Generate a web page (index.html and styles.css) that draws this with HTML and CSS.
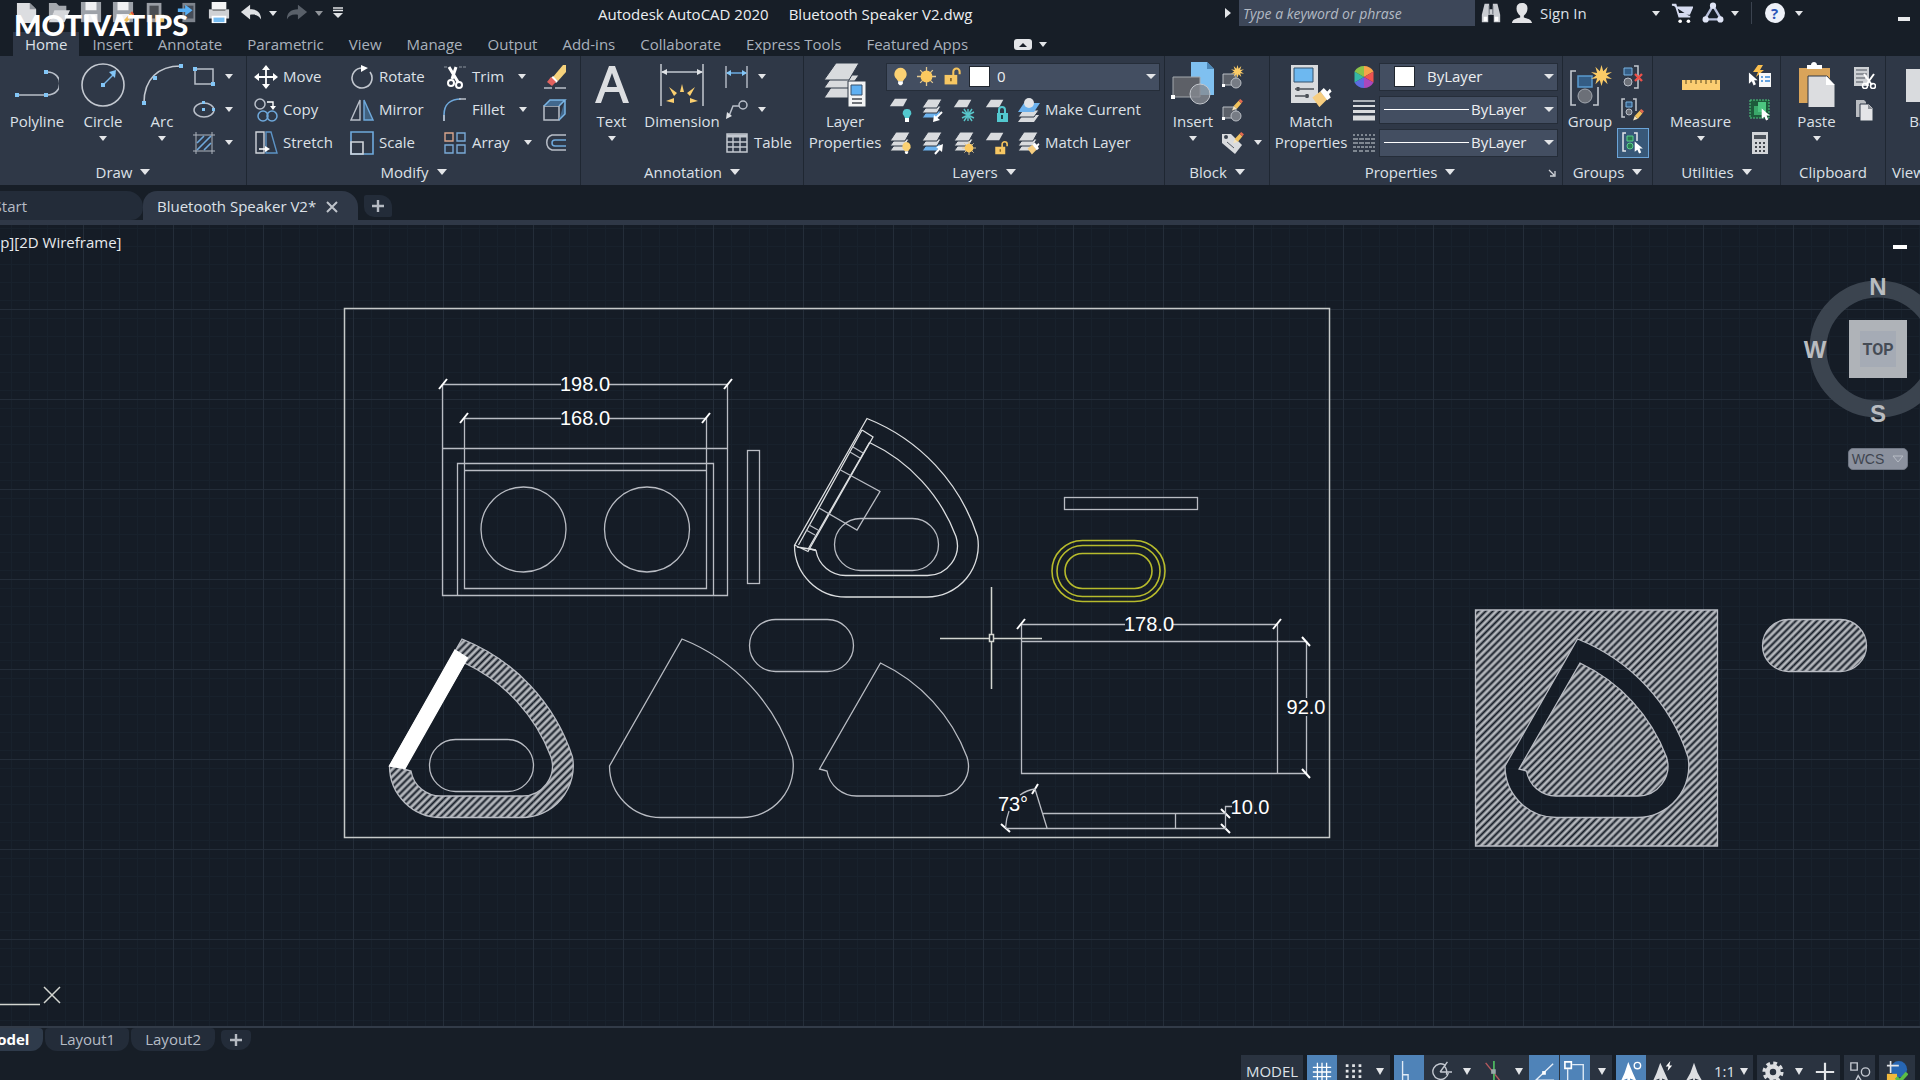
FILE: index.html
```html
<!DOCTYPE html>
<html lang="en">
<head>
    <meta charset="UTF-8">
    <meta name="viewport" content="width=device-width, initial-scale=1.0">
    <title>Autodesk AutoCAD 2020 - Bluetooth Speaker V2.dwg</title>
    <link rel="stylesheet" href="styles.css">
</head>
<body>
    <!-- shared icon parts -->
    <svg class="sprite" aria-hidden="true">
        <symbol id="sheet" viewBox="0 0 24 24"><path d="M7 2h15l-5 9H1z" fill="#d9dbde"/></symbol>
        <symbol id="stack" viewBox="0 0 24 24">
            <path d="M6 13h14l-4 7H1z" fill="#d9dbde" stroke="#2f3847"/>
            <path d="M6 8h14l-4 7H1z" fill="#d9dbde" stroke="#2f3847"/>
            <path d="M7 1h14l-5 9H1z" fill="#d9dbde" stroke="#2f3847"/>
        </symbol>
        <symbol id="bstack" viewBox="0 0 24 24">
            <path d="M6 13h14l-4 7H1z" fill="#6cb2ee" stroke="#2f3847"/>
            <path d="M6 8h14l-4 7H1z" fill="#d9dbde" stroke="#2f3847"/>
            <path d="M7 1h14l-5 9H1z" fill="#d9dbde" stroke="#2f3847"/>
        </symbol>
        <symbol id="pencil" viewBox="0 0 24 24">
            <path d="M2 22l3-8 6 5z" fill="#f3e3c0"/><path d="M5 14l9-10 5 5-8 10z" fill="#f2c25c"/><path d="M14 4l3-3 5 4-3 4z" fill="#e36a4f"/>
        </symbol>
        <symbol id="bulb" viewBox="0 0 24 24">
            <path d="M12 1a8 8 0 0 0-5 14l2 3h6l2-3a8 8 0 0 0-5-14z" fill="#fbd173"/><path d="M9 18h6v3l-2 2h-2l-2-2z" fill="#fff"/>
        </symbol>
        <symbol id="sun" viewBox="0 0 24 24">
            <path d="M12 0v24M0 12h24M4 4l16 16M20 4L4 20" stroke="#e2c892" stroke-width="1.6"/><circle cx="12" cy="12" r="7.5" fill="#fbc95f"/>
        </symbol>
        <symbol id="lock" viewBox="0 0 24 24">
            <path d="M13 11V6a4 4 0 0 1 8 0v3" fill="none" stroke="#f5c35c" stroke-width="2.6"/><path d="M2 10h16v12H2z" fill="#f7c763"/><path d="M10 14v4" stroke="#7a5a20" stroke-width="2"/>
        </symbol>
        <symbol id="star" viewBox="0 0 24 24">
            <path d="M12 0l2 7 5-5-2 7 7-1-6 4 6 4-7-1 2 7-5-5-2 7-2-7-5 5 2-7-7 1 6-4-6-4 7 1-2-7 5 5z" fill="#fbcb66"/>
        </symbol>
        <symbol id="cursor" viewBox="0 0 24 24"><path d="M5 1v19l5-4 3 7 4-2-3-7h6z" fill="#fff"/></symbol>
        <symbol id="brush" viewBox="0 0 24 24">
            <path d="M1 12l9-7 8 9-9 9z" fill="#f6cd80"/><path d="M10 5l4-4 4 4 3-3 2 3-3 3 2 4-4 3z" fill="#fff"/>
        </symbol>
        <symbol id="blockpart" viewBox="0 0 24 24">
            <path d="M2 9h13v11H2z" fill="#5b6069" stroke="#b9bdc4"/><circle cx="15" cy="18" r="5" fill="#777c85" stroke="#b9bdc4"/><path d="M1 19h3v3H1z" fill="#fff"/>
        </symbol>
    </svg>

    <div class="watermark">MOTIVATIPS</div>

    <header class="title-bar">
        <div class="quick">
            <button aria-label="New"><svg viewBox="0 0 24 24"><path d="M1 1h14l7 7v15H1z" fill="#dcdde0"/><path d="M15 1v7h7" fill="#8f949c"/></svg></button>
            <button aria-label="Open"><svg viewBox="0 0 24 24"><path d="M1 1h8l3 3h8v6H7L1 22z" fill="#a4a8ae"/><path d="M7 9h17l-6 13H1z" fill="#d6d8dc"/></svg></button>
            <button aria-label="Save"><svg viewBox="0 0 24 24"><path d="M1 0h22v22H1z" fill="#9da2a9"/><path d="M6 0h12v9H6zM5 13h14v9H5z" fill="#f1f2f4"/></svg></button>
            <button aria-label="Save as"><svg viewBox="0 0 24 24"><path d="M1 0h22v22H1z" fill="#9da2a9"/><path d="M6 0h12v9H6zM5 13h14v9H5z" fill="#f1f2f4"/><path d="M13 20l8-9 3 3-8 8z" fill="#f0bd56"/><path d="M20 12l2-2 2 3v2z" fill="#e2573e"/></svg></button>
            <button aria-label="Open from mobile"><svg viewBox="0 0 24 24"><path d="M3 1h16v21H3z" fill="#9a9ea5"/><path d="M6 4h10v14H6z" fill="#4a4d52"/><path d="M12 14h10v8H12z" fill="#edc06a"/></svg></button>
            <button aria-label="Save to mobile"><svg viewBox="0 0 24 24"><path d="M7 1h14v21H7z" fill="#7e848d"/><path d="M9 4h10v14H9z" fill="#454c57"/><path d="M2 7h8V3l8 6-8 6v-4H2z" fill="#59b0f5"/></svg></button>
            <button aria-label="Plot"><svg viewBox="0 0 24 24"><path d="M4 0h16v8H4z" fill="#f4f4f5"/><path d="M1 8h22v10H1z" fill="#cfd1d4"/><path d="M5 9h14" stroke="#666"/><path d="M4 15h16v8H4z" fill="#fff"/><path d="M6 17h12v5H6z" fill="#76bdf2"/></svg></button>
            <button class="history" aria-label="Undo"><svg viewBox="0 0 24 24"><path d="M1 11l10-8v5c8 0 12 4 12 11-2-4-6-6-12-5v5z" fill="#dfe1e4"/></svg><i class="caret"></i></button>
            <button class="history dim" aria-label="Redo"><svg viewBox="0 0 24 24"><path d="M23 11L13 3v5C5 8 1 12 1 19c2-4 6-6 12-5v5z" fill="#596069"/></svg><i class="caret"></i></button>
            <button class="custom" aria-label="Customize"><svg viewBox="0 0 12 12"><path d="M1 1h10M1 3.5h10" stroke="#dfe1e4" stroke-width="1.4"/><path d="M1 6h10l-5 5z" fill="#dfe1e4"/></svg></button>
        </div>
        <div class="window-title"><span>Autodesk AutoCAD 2020</span><span>Bluetooth Speaker V2.dwg</span></div>
        <div class="infocenter">
            <i class="caret side"></i>
            <input class="search" type="text" placeholder="Type a keyword or phrase" aria-label="Search">
            <button aria-label="Find"><svg viewBox="0 0 24 24"><path d="M5 2h5v6h4V2h5l3 12v8h-7v-8h-6v8H2v-8z" fill="#c9ccd1"/><path d="M4 16h4v5H4zM16 16h4v5h-4z" fill="#fff"/><path d="M10 4v9M14 4v9" stroke="#565d67"/></svg></button>
            <button class="sign-in"><svg viewBox="0 0 24 24"><path d="M12 1c-4 0-6 2-6 6s2 6 4 8v2c-3 1-8 1-9 6h22c-1-5-6-5-9-6v-2c2-2 4-4 4-8s-2-6-6-6z" fill="#e2e3e6"/></svg><span>Sign In</span><i class="caret"></i></button>
            <button aria-label="App Store"><svg viewBox="0 0 24 24"><path d="M1 3h4l4 13h12M6 6h17l-3 7H8" fill="#d5dbf0" stroke="#d5dbf0" stroke-width="2"/><circle cx="10" cy="21" r="2" fill="#fff"/><circle cx="19" cy="21" r="2" fill="#fff"/></svg></button>
            <button class="network" aria-label="Autodesk App"><svg viewBox="0 0 24 24"><path d="M12 4l9 15H3z" fill="none" stroke="#b8c0dc" stroke-width="2.6"/><circle cx="12" cy="4" r="3.4" fill="#dfe4f5"/><circle cx="4" cy="19" r="3.4" fill="#dfe4f5"/><circle cx="20" cy="19" r="3.4" fill="#dfe4f5"/></svg><i class="caret"></i></button>
            <button class="help" aria-label="Help"><b>?</b><i class="caret"></i></button>
            <button class="minimize" aria-label="Minimize"></button>
        </div>
    </header>

    <nav class="ribbon-tabs">
        <button class="active">Home</button>
        <button>Insert</button>
        <button>Annotate</button>
        <button>Parametric</button>
        <button>View</button>
        <button>Manage</button>
        <button>Output</button>
        <button>Add-ins</button>
        <button>Collaborate</button>
        <button>Express Tools</button>
        <button>Featured Apps</button>
        <button class="collapse" aria-label="Minimize ribbon"><svg viewBox="0 0 18 11"><rect width="18" height="11" rx="3" fill="#e3e5e8"/><path d="M5 8l4-4 4 4z" fill="#1a212b"/></svg><i class="caret"></i></button>
    </nav>

    <section class="ribbon">
        <div class="panel">
            <div class="tools draw">
                <button class="big"><svg viewBox="0 0 44 46"><path d="M2 34h30c17 0 17-23 0-23" fill="none" stroke="#b9bfc9" stroke-width="1.6"/><path d="M0 32h4v4H0zM29 32h4v4h-4zM29 9h4v4h-4z" fill="#83c6f7"/></svg>Polyline</button>
                <button class="big"><svg viewBox="0 0 44 46"><circle cx="22" cy="24" r="21" fill="none" stroke="#c3c8d0" stroke-width="1.6"/><path d="M22 24L34 12" stroke="#79b4e4" stroke-width="1.4"/><path d="M20 22h4v4h-4z" fill="#83c6f7"/><path d="M35 9l-1 8-6-6z" fill="#83c6f7"/></svg>Circle<i class="caret"></i></button>
                <button class="big"><svg viewBox="0 0 44 46"><path d="M4 42C4 18 18 5 41 5" fill="none" stroke="#c3c8d0" stroke-width="1.6"/><path d="M2 40h4v4H2zM13 15h4v4h-4zM39 3h4v4h-4z" fill="#83c6f7"/></svg>Arc<i class="caret"></i></button>
                <button class="small" aria-label="Rectangle"><svg viewBox="0 0 24 24"><path d="M3 4h18v15H3z" fill="none" stroke="#b9bfc9" stroke-width="1.5"/><path d="M1 2h4v4H1zM19 17h4v4h-4z" fill="#83c6f7"/></svg><i class="caret"></i></button>
                <button class="small" aria-label="Ellipse"><svg viewBox="0 0 24 24"><ellipse cx="12" cy="12" rx="10" ry="7" fill="none" stroke="#b9bfc9" stroke-width="1.5"/><path d="M10 10h3v3h-3zM10 3h3v3h-3zM20 10h3v3h-3z" fill="#83c6f7"/></svg><i class="caret"></i></button>
                <button class="small" aria-label="Hatch"><svg viewBox="0 0 24 24"><path d="M4 1v22M20 1v22M1 4h22M1 20h22" stroke="#aeb4be"/><path d="M5 12l7-7M5 19L19 5M12 19l7-7" stroke="#6fa9dc" stroke-width="1.6"/></svg><i class="caret"></i></button>
            </div>
            <button class="panel-title">Draw<i class="caret"></i></button>
        </div>

        <div class="panel">
            <div class="tools modify">
                <button class="small"><svg viewBox="0 0 24 24"><path d="M12 3v18M3 12h18" stroke="#fff" stroke-width="1.8"/><path d="M12 0l4 5H8zM12 24l4-5H8zM0 12l5-4v8zM24 12l-5-4v8z" fill="#fff"/></svg>Move</button>
                <button class="small"><svg viewBox="0 0 24 24"><circle cx="6" cy="6" r="5" fill="none" stroke="#b9bfc9" stroke-width="1.5"/><path d="M13 4h6v5" fill="none" stroke="#fff" stroke-width="1.4"/><path d="M16 8h6l-3 4z" fill="#fff"/><circle cx="9" cy="18" r="5" fill="none" stroke="#6fa9dc" stroke-width="1.5"/><circle cx="18" cy="18" r="5" fill="none" stroke="#6fa9dc" stroke-width="1.5"/></svg>Copy</button>
                <button class="small"><svg viewBox="0 0 24 24"><path d="M2 1h8v21H2z" fill="none" stroke="#d0d4da" stroke-width="1.4"/><path d="M12 1h5l6 21H12z" fill="none" stroke="#5d94c6" stroke-width="1.4"/><path d="M5 18h7" stroke="#fff" stroke-width="1.5"/><path d="M11 15l5 3-5 3z" fill="#fff"/></svg>Stretch</button>
                <button class="small"><svg viewBox="0 0 24 24"><path d="M20 7a10 10 0 1 1-8-4" fill="none" stroke="#c3c8d0" stroke-width="1.6"/><path d="M11 0l7 3-7 4z" fill="#fff"/></svg>Rotate</button>
                <button class="small"><svg viewBox="0 0 24 24"><path d="M10 2v20H1z" fill="none" stroke="#b9bfc9" stroke-width="1.4"/><path d="M14 2v20h9z" fill="#41617f" stroke="#6fa9dc" stroke-width="1.4"/></svg>Mirror</button>
                <button class="small"><svg viewBox="0 0 24 24"><path d="M1 1h22v22H1z" fill="none" stroke="#6fa9dc" stroke-width="1.6"/><path d="M1 11h12v12H1z" fill="none" stroke="#d0d4da" stroke-width="1.6"/></svg>Scale</button>
                <button class="small"><svg viewBox="0 0 24 24"><path d="M1 2h4M16 2h7" stroke="#8d949f" stroke-dasharray="3 1"/><path d="M6 2l9 15M13 2L9 14" stroke="#fff" stroke-width="3"/><circle cx="8" cy="18" r="3" fill="none" stroke="#fff" stroke-width="2"/><circle cx="16" cy="20" r="3" fill="none" stroke="#fff" stroke-width="2"/></svg>Trim<i class="caret"></i></button>
                <button class="small"><svg viewBox="0 0 24 24"><path d="M1 23v-6C1 6 8 1 18 1" fill="none" stroke="#6fa9dc" stroke-width="1.6"/><path d="M1 23v-6M16 1h7" stroke="#b9bfc9" stroke-width="1.6"/></svg>Fillet<i class="caret"></i></button>
                <button class="small"><svg viewBox="0 0 24 24"><path d="M2 2h8v8H2z" fill="none" stroke="#d9a58c" stroke-width="1.4"/><path d="M14 2h8v8h-8zM2 14h8v8H2zM14 14h8v8h-8z" fill="none" stroke="#79a9d6" stroke-width="1.4"/></svg>Array<i class="caret"></i></button>
                <button class="small" aria-label="Erase"><svg viewBox="0 0 24 24"><path d="M10 12L20 0h3v7l-8 9z" fill="#f6d27c"/><path d="M8 13l2-2 5 5-2 2z" fill="#fff"/><path d="M4 17l4-5 5 5-4 4z" fill="#e2625f"/><path d="M1 23h8M12 23h11" stroke="#b9bfc9" stroke-width="1.5"/></svg></button>
                <button class="small" aria-label="Explode"><svg viewBox="0 0 24 24"><path d="M1 8h15v14H1z" fill="none" stroke="#b9bfc9" stroke-width="1.5"/><path d="M1 8l6-6h15l-6 6M16 22l6-6V2" fill="#42688d" stroke="#79b4e4" stroke-width="1.5"/></svg></button>
                <button class="small" aria-label="Offset"><svg viewBox="0 0 24 24"><path d="M23 4H9a8 8 0 0 0 0 15h14" fill="none" stroke="#b9bfc9" stroke-width="1.5"/><path d="M23 9H12a3 3 0 0 0 0 6h11" fill="none" stroke="#6fa9dc" stroke-width="1.5"/></svg></button>
            </div>
            <button class="panel-title">Modify<i class="caret"></i></button>
        </div>

        <div class="panel">
            <div class="tools annotation">
                <button class="big"><svg viewBox="0 0 44 46"><path d="M5 42L19 5h6l14 37h-6l-4-11H15l-4 11zM17 26h10l-5-14z" fill="#dcdee1"/></svg>Text<i class="caret"></i></button>
                <button class="big"><svg viewBox="0 0 44 46"><path d="M1 3v42M43 3v42" stroke="#c3c8d0" stroke-width="1.5"/><path d="M2 11h40" stroke="#c3c8d0" stroke-width="1.5"/><path d="M1 11l6-3v6zM43 11l-6-3v6z" fill="#dfe2e6"/><path d="M22 23l2 8h-4zM9 26l8 6-3 3zM35 26l-8 6 3 3zM6 40l8-3v5zM38 40l-8-3v5z" fill="#fbcf6f"/></svg>Dimension</button>
                <button class="small" aria-label="Linear"><svg viewBox="0 0 24 24"><path d="M1 1v22M22 1v22" stroke="#b9bfc9" stroke-width="1.4"/><path d="M2 8h19" stroke="#6fb4ee" stroke-width="1.4"/><path d="M1 8l5-3v6zM22 8l-5-3v6z" fill="#83c6f7"/></svg><i class="caret"></i></button>
                <button class="small" aria-label="Leader"><svg viewBox="0 0 24 24"><circle cx="18" cy="7" r="4" fill="none" stroke="#b9bfc9" stroke-width="1.5"/><path d="M14 8H8L4 18" fill="none" stroke="#b9bfc9" stroke-width="1.5"/><path d="M1 21l1-7 5 4z" fill="#dfe2e6"/></svg><i class="caret"></i></button>
                <button class="small"><svg viewBox="0 0 24 24"><path d="M2 3h20v18H2z" fill="none" stroke="#c3c8d0" stroke-width="1.5"/><path d="M2 5h20" stroke="#c3c8d0" stroke-width="3"/><path d="M2 11h20M2 16h20M8 5v16M15 5v16" stroke="#c3c8d0" stroke-width="1.4"/></svg>Table</button>
            </div>
            <button class="panel-title">Annotation<i class="caret"></i></button>
        </div>

        <div class="panel">
            <div class="tools layers">
                <button class="big"><svg viewBox="0 0 44 46"><path d="M9 25h26l-9 12H1z" fill="#d9dbde" stroke="#2f3847"/><path d="M10 14h26l-9 13H1z" fill="#d9dbde" stroke="#2f3847"/><path d="M13 2h23L26 19H1z" fill="#d9dbde" stroke="#2f3847"/><path d="M25 20h18v26H25z" fill="#f2f3f4" stroke="#2f3847"/><path d="M28 24h11v10H28z" fill="#5fb0f2" stroke="#38516b"/><path d="M29 38h10M29 42h10" stroke="#43484f" stroke-width="1.4"/></svg>Layer<br>Properties</button>
                <div class="layer-grid">
                    <div class="combo">
                        <svg viewBox="0 0 24 24"><use href="#bulb"/></svg>
                        <svg viewBox="0 0 24 24"><use href="#sun"/></svg>
                        <svg viewBox="0 0 24 24"><use href="#lock"/></svg>
                        <i class="swatch"></i>
                        <select aria-label="Layer"><option>0</option></select>
                        <i class="caret"></i>
                    </div>
                    <div class="layer-row">
                        <button aria-label="Off"><svg viewBox="0 0 24 24"><use href="#sheet" width="20" height="20" y="-1"/><path d="M18 11a4 4 0 0 0-3 7l1 2h4l1-2a4 4 0 0 0-3-7z" fill="#53c8cf"/><path d="M16 20h4v4h-4z" fill="#fff"/></svg></button>
                        <button aria-label="Isolate"><svg viewBox="0 0 24 24"><use href="#bstack"/><path d="M21 14l-6 6" stroke="#fff" stroke-width="2"/><path d="M12 24l1-7 6 5z" fill="#fff"/></svg></button>
                        <button aria-label="Freeze"><svg viewBox="0 0 24 24"><use href="#sheet" width="20" height="20"/><path d="M15 11v12M9 14l12 6M9 20l12-6M11 11l8 12M19 11l-8 12" stroke="#58c5c9" stroke-width="1.4"/></svg></button>
                        <button aria-label="Lock"><svg viewBox="0 0 24 24"><use href="#sheet" width="20" height="20"/><path d="M14 15v-3a3 3 0 0 1 6 0v3" fill="none" stroke="#53c8cf" stroke-width="2"/><path d="M12 15h11v9H12z" fill="#53c8cf"/><path d="M17 17v4" stroke="#1c4448" stroke-width="2"/></svg></button>
                        <button class="labelled"><svg viewBox="0 0 24 24"><path d="M6 17h16l-5 7H1z" fill="#d9dbde"/><path d="M6 12h16l-5 7H1z" fill="#d9dbde" stroke="#2f3847"/><path d="M7 5h16l-6 9H1z" fill="#6cb2ee"/><circle cx="12" cy="5" r="5" fill="#e2e3e6"/></svg>Make Current</button>
                    </div>
                    <div class="layer-row">
                        <button aria-label="Turn all on"><svg viewBox="0 0 24 24"><use href="#stack"/><use href="#bulb" x="11" y="10" width="13" height="14"/></svg></button>
                        <button aria-label="Unisolate"><svg viewBox="0 0 24 24"><use href="#bstack"/><path d="M14 23l6-7" stroke="#fff" stroke-width="2"/><path d="M22 13l-1 8-6-5z" fill="#fff"/></svg></button>
                        <button aria-label="Thaw all"><svg viewBox="0 0 24 24"><use href="#stack"/><use href="#sun" x="9" y="10" width="14" height="14"/></svg></button>
                        <button aria-label="Unlock"><svg viewBox="0 0 24 24"><use href="#sheet" width="20" height="20"/><use href="#lock" x="9" y="9" width="15" height="16"/></svg></button>
                        <button class="labelled"><svg viewBox="0 0 24 24"><use href="#stack"/><use href="#brush" x="10" y="11" width="13" height="13"/></svg>Match Layer</button>
                    </div>
                </div>
            </div>
            <button class="panel-title">Layers<i class="caret"></i></button>
        </div>

        <div class="panel">
            <div class="tools block">
                <button class="big"><svg viewBox="0 0 44 46"><path d="M20 1h16l7 7v26H20z" fill="#7fc0f0"/><path d="M36 1v7h7" fill="#4d88b8"/><path d="M2 16h27v20H2z" fill="#5d6067" stroke="#a4a8ae"/><circle cx="29" cy="33" r="10" fill="#868a91" fill-opacity=".8" stroke="#c3c7cd"/><path d="M0 34h4v4H0z" fill="#fff"/></svg>Insert<i class="caret"></i></button>
                <button class="small" aria-label="Create"><svg viewBox="0 0 24 24"><use href="#blockpart"/><use href="#star" x="10" y="0" width="13" height="13"/></svg></button>
                <button class="small" aria-label="Edit"><svg viewBox="0 0 24 24"><use href="#blockpart"/><use href="#pencil" x="10" y="0" width="13" height="14"/></svg></button>
                <button class="small" aria-label="Edit attributes"><svg viewBox="0 0 24 24"><path d="M1 3h9l11 11-7 9L1 12z" fill="#d9dbde"/><circle cx="5" cy="6" r="2" fill="#3a424e"/><path d="M6 11l7 6" stroke="#555b64"/><use href="#pencil" x="11" y="0" width="13" height="14"/></svg><i class="caret"></i></button>
            </div>
            <button class="panel-title">Block<i class="caret"></i></button>
        </div>

        <div class="panel">
            <div class="tools properties">
                <button class="big"><svg viewBox="0 0 44 46"><path d="M2 4h27v38H2z" fill="#d9dbde"/><path d="M5 7h19v14H5z" fill="#6db8f0" stroke="#36526d"/><path d="M6 28h19M6 35h14" stroke="#4b5057" stroke-width="1.5"/><path d="M9 26v4M18 33v4" stroke="#4b5057" stroke-width="3"/><use href="#brush" x="22" y="26" width="22" height="21"/></svg>Match<br>Properties</button>
                <button class="small" aria-label="Object color"><svg viewBox="0 0 24 24"><path d="M12 12V1a11 11 0 0 1 9.500 5.500z" fill="#f7a34a"/><path d="M12 12l9.500-5.500v11z" fill="#ef5350"/><path d="M12 12l9.500 5.500A11 11 0 0 1 12 23z" fill="#ab47bc"/><path d="M12 12v11a11 11 0 0 1-9.500-5.500z" fill="#5c6be0"/><path d="M12 12l-9.500 5.500v-11z" fill="#35b8a6"/><path d="M12 12L2.500 6.500A11 11 0 0 1 12 1z" fill="#8bc34a"/></svg></button>
                <button class="small" aria-label="Lineweight"><svg viewBox="0 0 24 24"><path d="M1 3h22" stroke="#d9dbde" stroke-width="1.5"/><path d="M1 8h22" stroke="#d9dbde" stroke-width="2"/><path d="M1 13.500h22" stroke="#d9dbde" stroke-width="3"/><path d="M1 20h22" stroke="#d9dbde" stroke-width="5"/></svg></button>
                <button class="small" aria-label="Linetype"><svg viewBox="0 0 24 24"><path d="M1 4h22" stroke="#9ba1aa" stroke-width="1.5" stroke-dasharray="2 2"/><path d="M1 8h22M1 12h22" stroke="#9ba1aa" stroke-width="1.500" stroke-dasharray="5 1"/><path d="M1 16h22" stroke="#9ba1aa" stroke-width="1.500" stroke-dasharray="3 1"/><path d="M1 20h22" stroke="#9ba1aa" stroke-width="1.500" stroke-dasharray="4 2"/></svg></button>
                <div class="combo color"><i class="swatch"></i><select aria-label="Color"><option>ByLayer</option></select><i class="caret"></i></div>
                <div class="combo line"><hr><select aria-label="Lineweight"><option>ByLayer</option></select><i class="caret"></i></div>
                <div class="combo line"><hr><select aria-label="Linetype"><option>ByLayer</option></select><i class="caret"></i></div>
            </div>
            <div class="title-row">
                <button class="panel-title">Properties<i class="caret"></i></button>
                <button class="launcher" aria-label="Properties palette"><svg viewBox="0 0 8 8"><path d="M1 1l5 5M7 2v5H2" fill="none" stroke="#cfd3d9" stroke-width="1.3"/></svg></button>
            </div>
        </div>

        <div class="panel">
            <div class="tools groups">
                <button class="big"><svg viewBox="0 0 44 46"><path d="M8 10H3v34h5M25 44h5V26" fill="none" stroke="#c3c8d0" stroke-width="1.6"/><path d="M10 15h14v11H10z" fill="#345d85" stroke="#5a9ad0" stroke-width="1.500"/><circle cx="17" cy="35" r="7" fill="#6c7078" stroke="#a3a8b0"/><use href="#star" x="23" y="3" width="21" height="23"/></svg>Group</button>
                <button class="small" aria-label="Ungroup"><svg viewBox="0 0 24 24"><path d="M3 3h8v7H3z" fill="#345d85" stroke="#79b4e4"/><circle cx="7" cy="17" r="4" fill="#6c7078" stroke="#b9bfc9"/><path d="M13 1h4v22h-4" fill="none" stroke="#c3c8d0" stroke-width="1.500"/><path d="M14 9l7 7M21 9l-7 7" stroke="#ec5049" stroke-width="2.400"/></svg></button>
                <button class="small" aria-label="Group edit"><svg viewBox="0 0 24 24"><path d="M4 1H1v18h3M12 1h3v12" fill="none" stroke="#c3c8d0" stroke-width="1.500"/><path d="M5 4h6v5H5z" fill="#345d85" stroke="#79b4e4"/><circle cx="8" cy="14" r="3" fill="#6c7078" stroke="#b9bfc9"/><use href="#pencil" x="11" y="10" width="13" height="14"/></svg></button>
                <button class="small on" aria-label="Group selection"><svg viewBox="0 0 24 24"><path d="M5 2H2v18h3M13 2h3v8" fill="none" stroke="#e3e6ea" stroke-width="1.500"/><path d="M6 5h6v5H6z" fill="#2b7c52" stroke="#59cf8c"/><circle cx="9" cy="15" r="3" fill="#2b7c52" stroke="#59cf8c"/><use href="#cursor" x="11" y="9" width="13" height="15"/></svg></button>
            </div>
            <button class="panel-title">Groups<i class="caret"></i></button>
        </div>

        <div class="panel">
            <div class="tools utilities">
                <button class="big"><svg viewBox="0 0 44 46"><path d="M3 19h38v10H3z" fill="#fbcd72"/><path d="M7 19v4M12 19v3M17 19v4M22 19v3M27 19v4M32 19v3M37 19v4" stroke="#5a481f"/></svg>Measure<i class="caret"></i></button>
                <button class="small" aria-label="Quick select"><svg viewBox="0 0 24 24"><path d="M10 0l-5 7h5l-2 5 8-7h-4l3-5z" fill="#fbbf4e"/><use href="#cursor" x="-2" y="6" width="14" height="16"/><path d="M11 8h12v14H11z" fill="#f6f7f8"/><path d="M13 12h2M13 16h2M17 12h5M17 16h5" stroke="#3387d6" stroke-width="1.500"/></svg></button>
                <button class="small" aria-label="Select all"><svg viewBox="0 0 24 24"><path d="M2 2h19v18H2z" fill="#1d5b3b" stroke="#4ecb81" stroke-dasharray="2 1"/><path d="M6 8h9v9H6z" fill="#3aa869"/><path d="M10 4h8v10h-8z" fill="#4cc580"/><use href="#cursor" x="11" y="9" width="13" height="15"/></svg></button>
                <button class="small" aria-label="Calculator"><svg viewBox="0 0 24 24"><path d="M4 1h16v22H4z" fill="#d2d4d8"/><path d="M6 4h12v4H6z" fill="#4a5059"/><path d="M7 12h10M7 16h10M7 20h10" stroke="#43474e" stroke-width="2" stroke-dasharray="2 2"/></svg></button>
            </div>
            <button class="panel-title">Utilities<i class="caret"></i></button>
        </div>

        <div class="panel">
            <div class="tools clipboard">
                <button class="big"><svg viewBox="0 0 44 46"><path d="M4 7h31v35H4z" fill="#d9a45a"/><path d="M12 8V4h4c0-4 6-4 6 0h5v4z" fill="#fff"/><path d="M13 15h19l8 9v23H13z" fill="#dcdde0" stroke="#2f3847"/><path d="M31 15v9h9" fill="#fff"/></svg>Paste<i class="caret"></i></button>
                <button class="small" aria-label="Cut"><svg viewBox="0 0 24 24"><path d="M2 2h15v19H2z" fill="#cdd0d4"/><path d="M4 5h11M4 9h11M4 13h9M4 17h7" stroke="#4d535c"/><path d="M12 9l8 11M22 9l-8 11" stroke="#fff" stroke-width="2"/><circle cx="13" cy="21" r="2.500" fill="none" stroke="#fff" stroke-width="1.500"/><circle cx="21" cy="21" r="2.500" fill="none" stroke="#fff" stroke-width="1.500"/></svg></button>
                <button class="small" aria-label="Copy clip"><svg viewBox="0 0 24 24"><path d="M4 2h8l2 2v15H4z" fill="#b9bcc1"/><path d="M8 6h9l4 4v13H8z" fill="#e4e5e8" stroke="#2f3847"/><path d="M16 6v5h5" fill="#8c9097"/></svg></button>
            </div>
            <span class="panel-title">Clipboard</span>
        </div>

        <div class="panel cut">
            <div class="tools">
                <button class="big"><svg viewBox="0 0 44 46"><path d="M2 8h40v33H2z" fill="#d9dbde"/></svg>Base</button>
            </div>
            <span class="panel-title">View</span>
        </div>
    </section>

    <nav class="file-tabs">
        <button class="start">Start</button>
        <div class="file-tab"><button>Bluetooth Speaker V2*</button><button class="close" aria-label="Close"><svg viewBox="0 0 12 12"><path d="M1 1l10 10M11 1L1 11" stroke="#bfc4cb" stroke-width="2"/></svg></button></div>
        <button class="plus" aria-label="New drawing"><svg viewBox="0 0 12 12"><path d="M6 0v12M0 6h12" stroke="#b5bac2" stroke-width="2.400"/></svg></button>
    </nav>

    <main class="canvas">
        <svg class="drawing" role="img" aria-label="Model space">
            <defs>
                <pattern id="minor" width="18" height="18" x="11" y="3" patternUnits="userSpaceOnUse"><path d="M.5 0v18M0 .5h18" stroke="#18212c"/></pattern>
                <pattern id="major" width="90" height="90" x="83" y="84" patternUnits="userSpaceOnUse"><path d="M.5 0v90M0 .5h90" stroke="#242d39"/></pattern>
                <pattern id="hatch" width="5" height="5" patternUnits="userSpaceOnUse" patternTransform="rotate(45)"><path d="M2 0v5" stroke="#b4b7bc" stroke-width="3"/></pattern>
                <path id="shell" d="M682 639L609.500 766A51.500 51.500 0 0 0 661 817.500H742A51.500 51.500 0 0 0 792.500 757A190 190 0 0 0 682 639Z"/>
                <path id="cavity" d="M880.500 663L819.500 769L827 771A30 30 0 0 0 857 796H938A30 30 0 0 0 967 757A170 170 0 0 0 880.500 663Z"/>
                <rect id="slot" width="104" height="52" rx="26"/>
                <path id="tick" d="M-4 5L4 -5" stroke="#fff" stroke-width="2"/>
            </defs>
            <rect width="100%" height="100%" fill="url(#minor)"/>
            <rect width="100%" height="100%" fill="url(#major)"/>

            <g transform="translate(0 -225)" class="ink">
                <rect x="344.500" y="308.500" width="985" height="529" class="frame"/>

                <!-- front view -->
                <path d="M442.500 384V595.500H727.500V384M442.500 448.500H727.500"/>
                <path d="M457.500 596V463.500H713.500V596"/>
                <path d="M464.500 418V588.500H706.500V418M464.500 470.500H706.500"/>
                <circle cx="523.500" cy="529.500" r="42.500"/>
                <circle cx="647" cy="529.500" r="42.500"/>
                <path d="M443 384.500H561M609 384.500H728M464 418.500H561M609 418.500H706"/>
                <use href="#tick" x="443" y="384"/><use href="#tick" x="728" y="384"/>
                <use href="#tick" x="464" y="418"/><use href="#tick" x="706" y="418"/>
                <rect x="747.500" y="450.500" width="12" height="133"/>

                <!-- section with driver -->
                <g class="section">
                    <use href="#shell" x="185" y="-220.500"/>
                    <use href="#cavity" x="-11" y="-220.500"/>
                    <path d="M862 430L873 437L808 551.500L794.500 545M862 430L798.500 545M869.500 443L810 548M797 547L816 550"/>
                </g>
                <path d="M853 447L863 453M850 452L860 458M809 525L818 530M806 530L815 535M840.500 470L880 491.500L857 530L819 508"/>
                <use href="#slot" x="834.500" y="518.500"/>

                <!-- hatched shell -->
                <path fill="url(#hatch)" fill-rule="evenodd" transform="translate(-220)" d="M682 639L609.500 766A51.500 51.500 0 0 0 661 817.500H742A51.500 51.500 0 0 0 792.500 757A190 190 0 0 0 682 639ZM684.500 663L623.500 769L631 771A30 30 0 0 0 661 796H742A30 30 0 0 0 771 757A170 170 0 0 0 684.500 663Z"/>
                <path d="M455 650L467.500 658L405 768.500L389.500 766Z" fill="#fff" stroke="#fff"/>
                <use href="#slot" x="429.500" y="739.500"/>

                <use href="#shell"/>
                <use href="#slot" x="749.500" y="619.500"/>
                <use href="#cavity"/>

                <!-- grille and port -->
                <rect x="1064.500" y="497.500" width="133" height="12"/>
                <g class="port">
                    <rect x="1052" y="540.500" width="113" height="61" rx="30.500"/>
                    <rect x="1057" y="545.500" width="103" height="51" rx="25.500"/>
                    <rect x="1065" y="553.500" width="87" height="35" rx="17.500"/>
                </g>

                <!-- back plate -->
                <path d="M1021.500 624V773.500H1306M1277.500 624V773.500M1021.500 641.500H1306M1022 624.500H1125M1173 624.500H1277M1306.500 641V698M1306.500 716V774"/>
                <use href="#tick" x="1021" y="624"/><use href="#tick" x="1277" y="624"/>
                <path class="mark" d="M1302 637l8 9M1302 769l8 9M1001 824l9 8M1221 809l9 9M1221 824l9 9M1032 794l6-10"/>
                <path d="M1006 828.500H1226M1043 813.500H1225M1175.500 813V828M1047 828L1035 789Q1027 790 1020 795M1009 811Q1006 819 1005.500 828M1225.500 828V806.500H1232"/>

                <!-- hatched cutout -->
                <path fill="url(#hatch)" fill-rule="evenodd" transform="translate(895.500)" d="M580 610H822V846H580ZM682 639L609.500 766A51.500 51.500 0 0 0 661 817.500H742A51.500 51.500 0 0 0 792.500 757A190 190 0 0 0 682 639Z"/>
                <use href="#cavity" x="699.500" fill="url(#hatch)"/>
                <use href="#slot" x="1762.500" y="619.500" fill="url(#hatch)"/>

                <g class="dims">
                    <text x="585" y="391">198.0</text>
                    <text x="585" y="425">168.0</text>
                    <text x="1149" y="631">178.0</text>
                    <text x="1306" y="714">92.0</text>
                    <text x="1013" y="811">73°</text>
                    <text x="1250" y="814">10.0</text>
                </g>

                <path class="cross" d="M991.500 587V634M991.500 642V689M940 638.500H989M994 638.500H1042M989.500 634.500h4v7h-4z"/>
                <path class="ucs" d="M0 1004.500H40M44 987L60 1003M60 987L44 1003"/>
            </g>
        </svg>

        <div class="view-label"><button>[Top]</button><button>[2D Wireframe]</button></div>

        <button class="view-min" aria-label="Minimize viewport"></button>
        <div class="viewcube">
            <svg viewBox="0 0 160 160">
                <circle cx="80" cy="80" r="60" fill="none" stroke="#3b444f" stroke-width="17"/>
                <path d="M51 51h58v58H51z" fill="#afb3b8"/>
                <path d="M62 62h36v36H62z" fill="#a5abb5"/>
                <text class="face" x="80" y="86">TOP</text>
                <text x="80" y="26">N</text>
                <text x="17" y="89">W</text>
                <text x="80" y="153">S</text>
            </svg>
            <button class="wcs">WCS<svg viewBox="0 0 12 8"><path d="M1 1h10L6 7z" fill="none" stroke="#b7bcc5"/></svg></button>
        </div>
    </main>

    <nav class="layout-tabs">
        <button class="active">Model</button>
        <button>Layout1</button>
        <button>Layout2</button>
        <button class="plus" aria-label="New layout"><svg viewBox="0 0 12 12"><path d="M6 0v12M0 6h12" stroke="#b5bac2" stroke-width="2.400"/></svg></button>
    </nav>

    <footer class="status-bar">
        <div class="group"><button class="model">MODEL</button></div>
        <div class="group">
            <button class="on" aria-label="Grid"><svg viewBox="0 0 24 24"><path d="M7 2v20M12 2v20M17 2v20M2 7h20M2 12h20M2 17h20" stroke="#fff" stroke-width="1.400"/></svg></button>
            <button aria-label="Snap"><svg viewBox="0 0 24 24"><path d="M3 5h18M3 11h18M3 17h18" stroke="#e3e5e8" stroke-width="3" stroke-dasharray="3 4"/></svg></button>
            <button class="drop" aria-label="Snap options"><i class="caret"></i></button>
        </div>
        <div class="group">
            <button class="on" aria-label="Ortho"><svg viewBox="0 0 24 24"><path d="M5 0v24M5 15h6v9" fill="none" stroke="#dfeaf5" stroke-width="1.500"/></svg></button>
            <button aria-label="Polar"><svg viewBox="0 0 24 24"><path d="M17 5a8.500 8.500 0 1 0 3 8" fill="none" stroke="#c3c8d0" stroke-width="1.500"/><path d="M11 12h13M11 12l8-11M16 6q3 3 2 9" fill="none" stroke="#c3c8d0" stroke-width="1.500"/></svg></button>
            <button class="drop" aria-label="Polar options"><i class="caret"></i></button>
            <button aria-label="Isodraft"><svg viewBox="0 0 24 24"><path d="M4 2l16 20" stroke="#b65a5e" stroke-width="1.500"/><path d="M13 0v24" stroke="#4bb25e" stroke-width="2"/><path d="M10 9h5v5h-5z" fill="#9aa"/></svg></button>
            <button class="drop" aria-label="Isodraft options"><i class="caret"></i></button>
            <button class="on" aria-label="Object snap tracking"><svg viewBox="0 0 24 24"><path d="M22 3L3 21h20" fill="none" stroke="#e6eef7" stroke-width="1.500"/><path d="M10 11h4v4h-4z" fill="#fff"/></svg></button>
            <button class="on" aria-label="Object snap"><svg viewBox="0 0 24 24"><path d="M9 4h12v20M4 9v15" fill="none" stroke="#dfeaf5" stroke-width="1.500"/><path d="M1 1h7v7H1z" fill="none" stroke="#fff" stroke-width="1.800"/></svg></button>
            <button class="drop" aria-label="Object snap options"><i class="caret"></i></button>
        </div>
        <div class="group">
            <button class="on" aria-label="Annotation visibility"><svg viewBox="0 0 24 24"><path d="M9 1l5 12 4 9-7-3V24H8v-5l-7 3 4-9z" fill="#fff"/><circle cx="19" cy="5" r="3.500" fill="none" stroke="#fff" stroke-width="1.500"/></svg></button>
            <button aria-label="Autoscale"><svg viewBox="0 0 24 24"><path d="M9 2l5 11 4 9-7-3V24H8v-5l-7 3 4-9z" fill="#dcdee1"/><path d="M20 0l-5 6h3l-1 5 5-6h-3z" fill="#fff"/></svg></button>
            <button aria-label="Annotation scale"><svg viewBox="0 0 24 24"><path d="M12 2l4 11 5 9-8-3V24h-2v-5l-8 3 5-9z" fill="#dcdee1"/></svg></button>
            <button class="scale">1:1<i class="caret"></i></button>
        </div>
        <div class="group">
            <button aria-label="Workspace"><svg viewBox="0 0 24 24"><circle cx="12" cy="12" r="6" fill="none" stroke="#dcdee1" stroke-width="5"/><circle cx="12" cy="12" r="9.500" fill="none" stroke="#dcdee1" stroke-width="4" stroke-dasharray="4 3.460"/></svg></button>
            <button class="drop" aria-label="Workspace options"><i class="caret"></i></button>
            <button aria-label="Annotation monitor"><svg viewBox="0 0 24 24"><path d="M12 2v20M2 12h20" stroke="#e3e5e8" stroke-width="2.400"/></svg></button>
        </div>
        <div class="group"><button aria-label="Isolate objects"><svg viewBox="0 0 24 24"><path d="M2 2h7v8H2z" fill="none" stroke="#c3c8d0" stroke-width="1.500"/><circle cx="18" cy="12" r="4.500" fill="none" stroke="#c3c8d0" stroke-width="1.500"/><path d="M6 24l4-8 5 8" fill="none" stroke="#c3c8d0" stroke-width="1.500"/></svg></button></div>
        <div class="group"><button class="last" aria-label="Hardware acceleration"><svg viewBox="0 0 24 24"><circle cx="14" cy="9" r="9" fill="#2766b3"/><path d="M1 5h13M5 0v13" stroke="#e3e5e8" stroke-width="1.800"/><path d="M1 14h11v10H1z" fill="#f2b93c"/><path d="M11 18l4 4 8-9" fill="none" stroke="#5cbd46" stroke-width="4"/></svg></button></div>
    </footer>
</body>
</html>
```
FILE: styles.css
```css
* {
    box-sizing: border-box;
}

body {
    margin: 0;
    height: 100vh;
    display: flex;
    flex-direction: column;
    overflow: hidden;
    background: #171e27;
    color: #dde1e7;
    font-family: "Open Sans", "Noto Sans", sans-serif;
    font-size: 15px;
    line-height: 21px;
}

button {
    margin: 0;
    padding: 0;
    border: none;
    background: none;
    color: inherit;
    font: inherit;
    white-space: nowrap;
    cursor: pointer;
}

svg {
    display: block;
    flex: none;
}

.sprite {
    display: none;
}

.caret {
    flex: none;
    border: 4px solid transparent;
    border-top: 5px solid #e3e5e8;
    border-bottom: none;
}

.watermark {
    position: absolute;
    left: 14px;
    top: 8px;
    z-index: 2;
    color: #fff;
    font: 900 29px/34px Lato, sans-serif;
}

/* title bar */
.title-bar {
    display: grid;
    grid-template-columns: 598fr 625fr 697fr;
    height: 30px;
    flex: none;
}

.title-bar svg {
    width: 22px;
    height: 22px;
}

.quick {
    display: flex;
    align-items: center;
    gap: 10px;
    height: 26px;
    padding-left: 16px;
}

.history {
    display: flex;
    align-items: center;
    gap: 7px;
    margin-right: -1px;
}

.dim .caret {
    opacity: .6;
}

.quick .custom svg {
    width: 12px;
    height: 12px;
}

.window-title {
    display: flex;
    gap: 20px;
    padding-top: 4px;
    color: #eceef1;
}

.infocenter {
    display: flex;
    align-items: center;
    height: 26px;
}

.caret.side {
    border: 5px solid transparent;
    border-left: 6px solid #e3e5e8;
    border-right: none;
    margin: 0 8px 0 2px;
}

.search {
    width: 236px;
    height: 26px;
    margin-right: 5px;
    padding: 0 4px;
    border: none;
    background: #3d4759;
    color: #dde1e7;
    font: italic 14px "Open Sans", sans-serif;
}

.search::placeholder {
    color: #b3bac4;
    opacity: 1;
}

.sign-in {
    display: flex;
    align-items: center;
    gap: 7px;
    margin: 0 11px 0 9px;
}

.sign-in .caret {
    margin-left: 58px;
}

.network {
    display: flex;
    align-items: center;
    gap: 7px;
    margin-left: 9px;
    padding-right: 12px;
    border-right: 1px solid #3b434f;
}

.help {
    display: flex;
    align-items: center;
    gap: 10px;
    margin-left: 13px;
}

.help b {
    width: 20px;
    height: 20px;
    border-radius: 50%;
    background: #eef1f8;
    color: #2c56b8;
    line-height: 20px;
}

.minimize {
    width: 12px;
    height: 4px;
    margin: 12px 10px 0 auto;
    background: #e8eaec;
}

/* ribbon */
.ribbon-tabs {
    display: flex;
    gap: 1px;
    height: 26px;
    padding-left: 13px;
    flex: none;
    color: #a9b1bc;
}

.ribbon-tabs button {
    height: 26px;
    margin-top: 2px;
    padding: 0 12px 2px;
}

.ribbon-tabs .active {
    background: #2f3847;
    color: #dde1e7;
}

.ribbon-tabs .collapse {
    display: flex;
    align-items: center;
    gap: 7px;
    margin-left: 21px;
}

.collapse svg {
    width: 18px;
    height: 11px;
}

.ribbon {
    display: grid;
    grid-template-columns: 247fr 334fr 223fr 361fr 105fr 293fr 90fr 128fr 105fr 34fr;
    height: 129px;
    flex: none;
    background: #2f3847;
}

.panel {
    display: flex;
    flex-direction: column;
    min-width: 0;
    padding-top: 4px;
    border-right: 1px solid #1f2732;
}

.panel.cut {
    overflow: hidden;
    border: none;
}

.panel-title {
    display: flex;
    justify-content: center;
    align-items: center;
    gap: 8px;
    height: 26px;
}

.panel-title .caret {
    border-width: 6px 5px 0;
}

.tools {
    display: grid;
    grid-template-rows: repeat(3, 33px);
    grid-auto-flow: column;
    justify-content: start;
}

.big {
    grid-row: span 3;
    display: block;
    text-align: center;
}

.big svg {
    width: 44px;
    height: 46px;
    margin: 1px auto 4px;
}

.big .caret {
    display: block;
    width: 8px;
    margin: 4px auto 0;
}

.tools > button.big {
    align-self: start;
}

.small {
    display: flex;
    align-items: center;
    gap: 5px;
}

.small svg {
    width: 24px;
    height: 24px;
}

.small .caret {
    margin-left: 4px;
}

.draw {
    grid-template-columns: 74px 58px 60px auto;
}

.modify {
    grid-template-columns: 96px 93px 100px auto;
    padding-left: 7px;
}

.modify .small .caret {
    margin-left: 9px;
}

.annotation {
    grid-template-columns: 61px 80px auto;
}

.annotation .small {
    padding-left: 3px;
}

.layers {
    grid-template-columns: 82px 1fr;
    justify-content: stretch;
    padding-right: 4px;
}

.layer-grid {
    grid-row: span 3;
    display: grid;
    grid-template-rows: repeat(3, 33px);
}

.combo {
    display: flex;
    align-items: center;
    height: 28px;
    align-self: center;
    padding-right: 3px;
    background: #434e61;
    border: 1px solid #252d39;
}

.combo select {
    flex: 1;
    min-width: 0;
    padding: 0;
    border: none;
    outline: none;
    appearance: none;
    background: none;
    color: #eceef1;
    font: inherit;
}

.combo .caret {
    border-width: 5px 5px 0;
}

.swatch {
    width: 21px;
    height: 21px;
    background: #fff;
    border: 1px solid #20262f;
}

.layers .combo {
    gap: 7px;
    padding-left: 4px;
}

.layers .combo svg {
    width: 19px;
    height: 19px;
}

.layer-row {
    display: flex;
    align-items: center;
    gap: 8px;
    padding-left: 3px;
}

.layer-row svg {
    width: 24px;
    height: 24px;
}

.labelled {
    display: flex;
    align-items: center;
    gap: 4px;
}

.block {
    grid-template-columns: 56px auto;
}

.properties {
    grid-template-columns: 82px 27px 1fr;
    justify-content: stretch;
    padding-right: 4px;
}

.color {
    padding-left: 14px;
    gap: 12px;
}

.line {
    padding-left: 4px;
    gap: 2px;
}

.line hr {
    width: 85px;
    height: 1px;
    margin: 0;
    border: none;
    background: #fff;
}

.title-row {
    display: flex;
    position: relative;
    justify-content: center;
    padding-right: 12px;
}

.launcher {
    position: absolute;
    right: 6px;
    top: 10px;
}

.launcher svg {
    width: 8px;
    height: 8px;
}

.groups {
    grid-template-columns: 54px auto;
}

.groups .small {
    justify-content: center;
    width: 32px;
}

.groups .on {
    height: 30px;
    align-self: center;
    background: #385878;
    border: 1px solid #6ba4d8;
}

.utilities {
    grid-template-columns: 95px auto;
}

.clipboard {
    grid-template-columns: 71px auto;
}

.cut .big {
    margin-left: 18px;
}

.cut .panel-title {
    justify-content: start;
    padding-left: 6px;
}

/* drawing tabs */
.file-tabs {
    display: flex;
    align-items: flex-end;
    height: 40px;
    flex: none;
    padding-top: 6px;
    border-bottom: 5px solid #2f3847;
}

.start {
    width: 143px;
    height: 29px;
    padding: 2px 116px 0 0;
    border-radius: 0 16px 12px 0;
    background: #232c39;
    color: #b6bcc6;
    text-align: left;
    direction: rtl;
}

.file-tab {
    display: flex;
    align-items: center;
    gap: 10px;
    height: 29px;
    padding: 2px 20px 0 14px;
    border-radius: 14px 16px 0 0;
    background: #2f3847;
}

.close svg,
.plus svg {
    width: 12px;
    height: 12px;
}

.plus {
    display: flex;
    justify-content: center;
    align-items: center;
}

.file-tabs .plus {
    width: 28px;
    height: 22px;
    margin: 0 0 3px 6px;
    border-radius: 2px 12px 2px 10px;
    background: #232c39;
}

/* model space */
.canvas {
    position: relative;
    flex: 1;
    min-height: 0;
    overflow: hidden;
    background: #151c26;
}

.drawing {
    width: 100%;
    height: 100%;
}

.ink {
    fill: none;
    stroke: #b9bcc3;
    stroke-width: 1.3;
}

.section {
    stroke: #dcdee0;
}

.frame {
    stroke: #c6c9c9;
    stroke-width: 1.5;
}

.mark {
    stroke: #fff;
    stroke-width: 2;
}

.port {
    stroke: #b7bb2c;
    stroke-width: 1.6;
}

.cross,
.ucs {
    stroke: #d3d5d0;
    stroke-width: 1.5;
}

.dims {
    fill: #fff;
    stroke: none;
    font: 20px "Liberation Sans", sans-serif;
    text-anchor: middle;
}

.view-label {
    position: absolute;
    left: -22px;
    top: 7px;
    color: #e8eaed;
}

.view-min {
    position: absolute;
    right: 13px;
    top: 20px;
    width: 14px;
    height: 4px;
    background: #fff;
}

.viewcube {
    position: absolute;
    right: -38px;
    top: 44px;
    width: 160px;
}

.viewcube text {
    fill: #b9bcc0;
    font: bold 24px "Liberation Sans", sans-serif;
    text-anchor: middle;
}

.viewcube .face {
    fill: #454c56;
    font: bold 16px "Liberation Sans Narrow", "Roboto", sans-serif;
}

.wcs {
    display: flex;
    align-items: center;
    justify-content: center;
    gap: 8px;
    width: 60px;
    height: 22px;
    margin: 19px auto 0;
    border: 1px solid #6f7683;
    border-radius: 5px;
    background: #8b919e;
    color: #3f4550;
    font: 14px "Liberation Sans", sans-serif;
}

.wcs svg {
    width: 12px;
    height: 8px;
}

/* layout tabs and status bar */
.layout-tabs {
    display: flex;
    height: 29px;
    flex: none;
    gap: 2px;
    border-top: 2px solid #323b48;
    color: #b6bcc6;
}

.layout-tabs button {
    height: 23px;
    padding: 0 14px;
    border-radius: 4px 4px 12px 12px;
    background: #232c39;
}

.layout-tabs .active {
    margin-left: -31px;
    background: #2f3b4b;
    color: #fff;
    font-weight: bold;
}

.layout-tabs .plus {
    width: 30px;
    height: 20px;
    margin: 2px 0 0 4px;
    padding: 0;
}

.status-bar {
    display: flex;
    justify-content: flex-end;
    gap: 4px;
    height: 25px;
    flex: none;
    padding-right: 5px;
    overflow: hidden;
}

.group {
    display: flex;
    background: #2a3340;
}

.status-bar button {
    display: flex;
    align-items: center;
    justify-content: center;
    width: 31px;
    height: 33px;
}

.status-bar svg {
    width: 22px;
    height: 22px;
}

.status-bar .on {
    background: #4f83b8;
    border-right: 1px solid #2a3340;
}

.status-bar .model {
    width: 62px;
}

.status-bar .drop {
    width: 21px;
}

.status-bar .scale {
    width: 44px;
    gap: 5px;
}

.status-bar .last {
    width: 36px;
}

.status-bar .caret {
    border-width: 7px 4px 0;
}
```
